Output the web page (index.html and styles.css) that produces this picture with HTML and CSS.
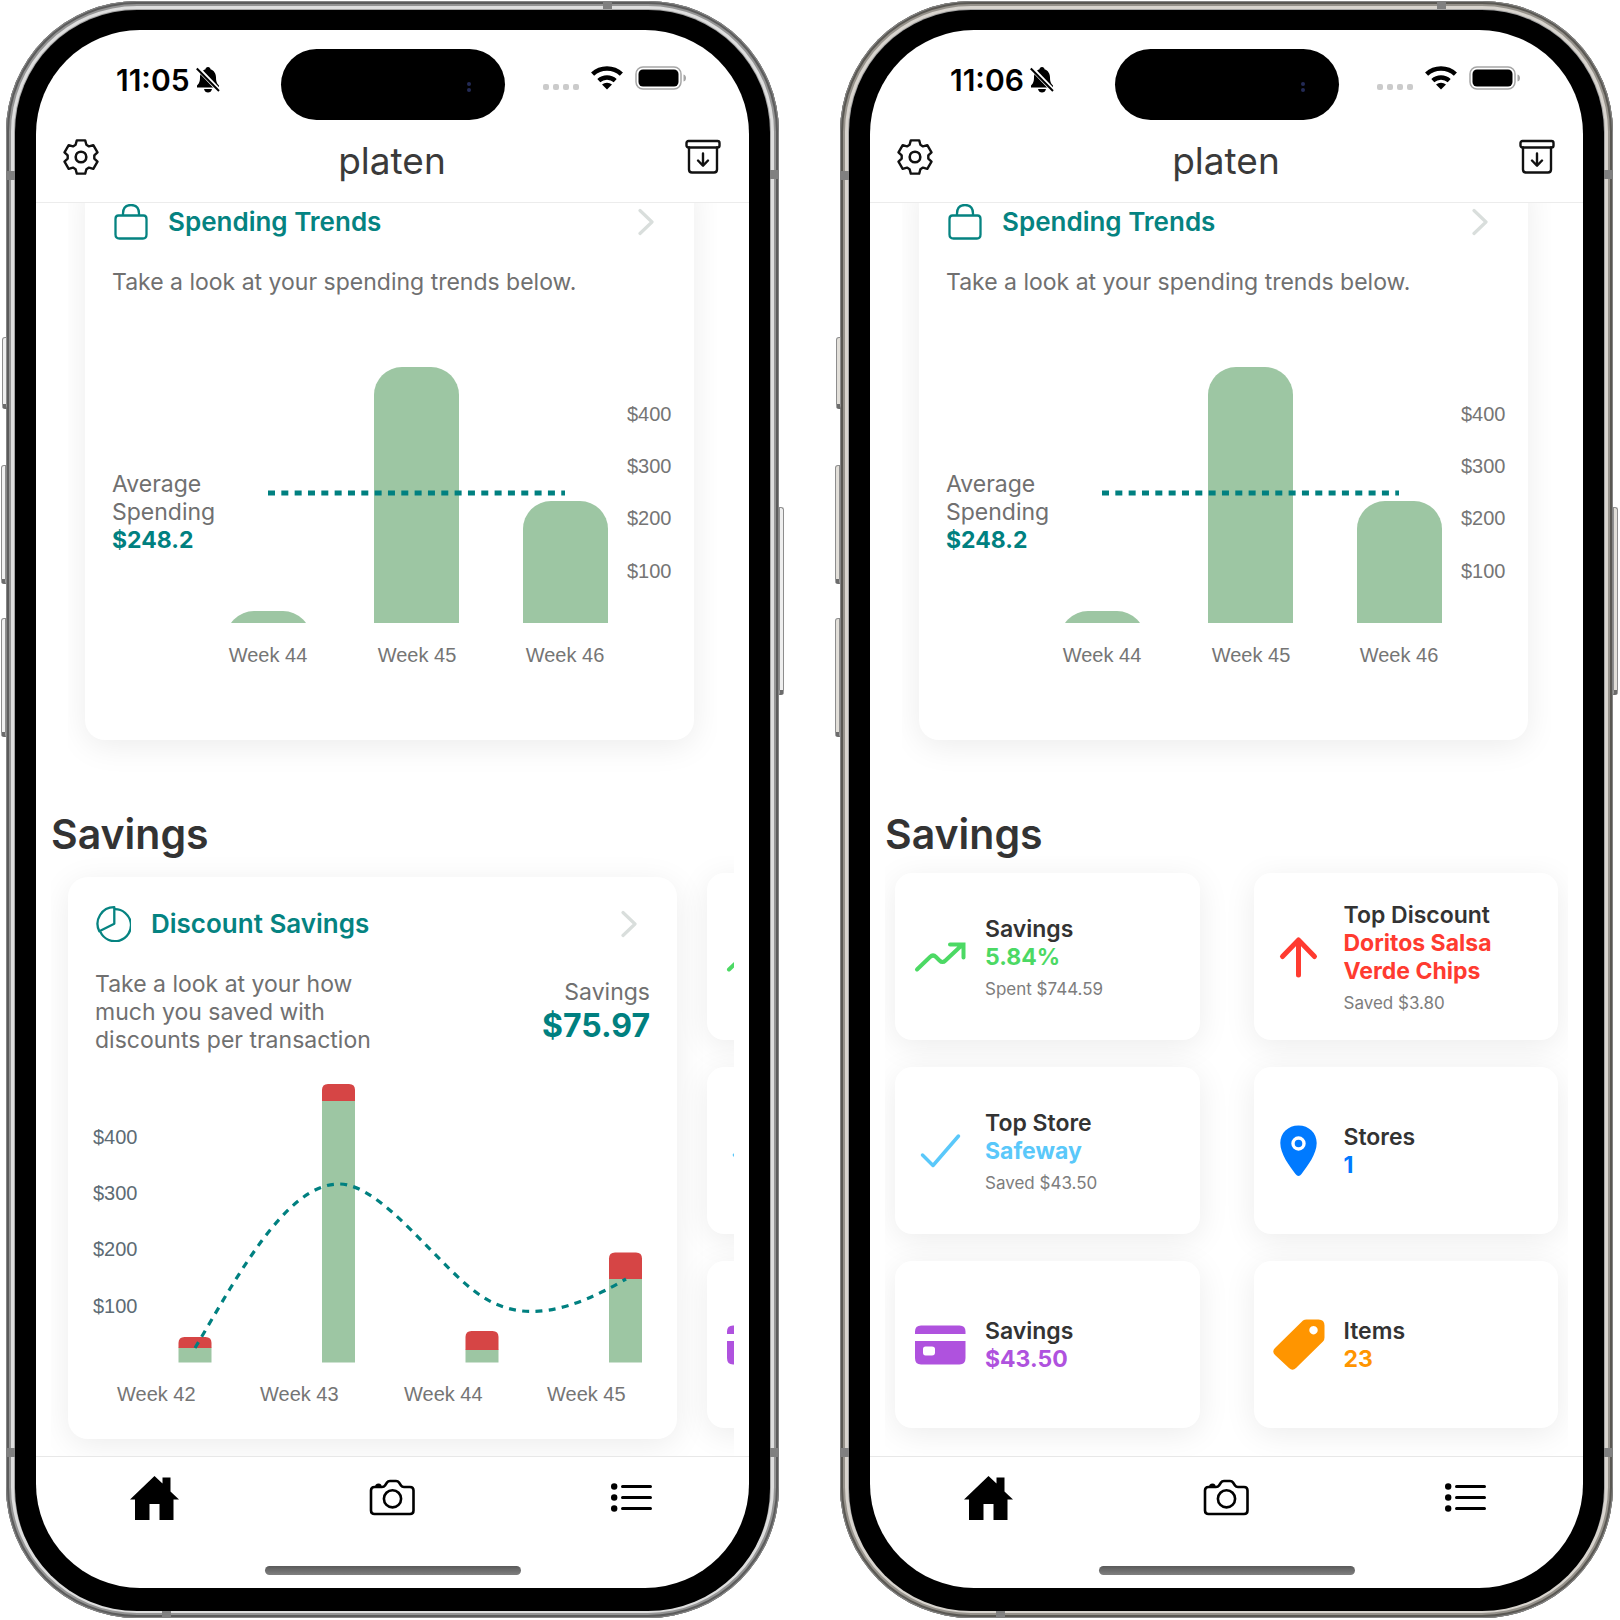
FILE: index.html
```html
<!DOCTYPE html>
<html lang="en">
<head>
<meta charset="utf-8">
<meta name="viewport" content="width=device-width, initial-scale=1">
<title>platen</title>
<link rel="stylesheet" href="styles.css">
</head>
<body>
<svg class="sprite" aria-hidden="true">
  <symbol id="bell-off" viewBox="0 0 24 26">
    <path d="M12 0C13.600 0 14.300 1 14.500 2.200C18 3.400 20 6.600 20 10.500C20 15.500 21.500 17 23 18.600V20.500H1V18.600C2.500 17 4 15.500 4 10.500C4 6.600 6 3.400 9.500 2.200C9.700 1 10.400 0 12 0Z"/>
    <path d="M8 22H16C15.500 24.500 14 25.500 12 25.500S8.500 24.500 8 22Z"/>
    <path d="M1.500 1L23.500 24" stroke="#fff" stroke-width="4.500"/>
    <path d="M0.800 1.500L23 24" stroke="#000" stroke-width="2"/>
  </symbol>
  <symbol id="wifi" viewBox="0 0 32 24">
    <path d="M1.600 8.100A21 21 0 0 1 30.400 8.100" fill="none" stroke="#000" stroke-width="4.500"/>
    <path d="M7.800 14.600A12.500 12.500 0 0 1 24.200 14.600" fill="none" stroke="#000" stroke-width="4.500"/>
    <path d="M11 18.600A7.500 7.500 0 0 1 21 18.600L16 23.600Z"/>
  </symbol>
  <symbol id="battery" viewBox="0 0 52 24">
    <rect x="1" y="1" width="45" height="22" rx="7" fill="none" stroke="#a6a6a6" stroke-width="1.500"/>
    <rect x="3.500" y="3.500" width="40" height="17" rx="4.500"/>
    <path d="M48.500 8.500C50.500 9 51 10.500 51 12S50.500 15 48.500 15.500Z" fill="#a6a6a6"/>
  </symbol>
  <symbol id="gear" viewBox="-18 -18 36 36">
    <path d="M-4.200 -16.600H4.200L5.400 -12.200L8 -10.600L12.300 -11.900L16.500 -4.700L13.300 -1.600V1.600L16.500 4.700L12.300 11.900L8 10.600L5.400 12.200L4.200 16.600H-4.200L-5.400 12.200L-8 10.600L-12.300 11.900L-16.500 4.700L-13.300 1.600V-1.600L-16.500 -4.700L-12.300 -11.900L-8 -10.600L-5.400 -12.200Z" fill="none" stroke="#111" stroke-width="2.400" stroke-linejoin="round"/>
    <circle r="5.300" fill="none" stroke="#111" stroke-width="2.600"/>
  </symbol>
  <symbol id="archive" viewBox="0 0 36 36">
    <g fill="none" stroke="#111" stroke-width="2.400" stroke-linecap="round" stroke-linejoin="round">
      <rect x="1.500" y="2" width="33" height="6.500" rx="2"/>
      <path d="M4 8.500V30.500Q4 33.500 7 33.500H29Q32 33.500 32 30.500V8.500M18 14.500V26.500M13 21.500L18 26.800L23 21.500"/>
    </g>
  </symbol>
  <symbol id="bag" viewBox="0 0 36 36">
    <path d="M6.500 11.500H31.500Q34.500 11.500 34.500 15V30.500Q34.500 34.500 31 34.500H7.500Q3.500 34.500 3.500 30.500V15Q3.500 11.500 6.500 11.500ZM11 11V9.500Q11 1 19 1T27 9.500V11" fill="none" stroke="#058381" stroke-width="2.300"/>
  </symbol>
  <symbol id="pie" viewBox="0 0 36 36">
    <path d="M19.300 3.200A16 16 0 1 1 5.300 25.600" fill="none" stroke="#058381" stroke-width="2.300"/>
    <path d="M19.300 1.200V17.800L4.300 25.200A16.600 16.600 0 0 1 19.300 1.200Z" fill="none" stroke="#058381" stroke-width="2.300" stroke-linejoin="round"/>
  </symbol>
  <symbol id="chevron" viewBox="0 0 18 28">
    <path d="M2 2.500L14 14L2 25.500" fill="none" stroke="#d9dedc" stroke-width="3.200" stroke-linecap="round" stroke-linejoin="round"/>
  </symbol>
  <symbol id="trend" viewBox="0 0 52 52">
    <path d="M3 38.500L16 26Q19 23 22 26L25.500 29.500Q28.500 32.500 31.500 29.500L48 14M36 13.500H49.500V26.500" fill="none" stroke="#4cd964" stroke-width="4" stroke-linecap="round" stroke-linejoin="miter"/>
  </symbol>
  <symbol id="check" viewBox="0 0 52 52">
    <path d="M8.500 30L19 40.500L44.500 11" fill="none" stroke="#5ac8fa" stroke-width="3.500" stroke-linecap="round" stroke-linejoin="round"/>
  </symbol>
  <symbol id="card" viewBox="0 0 52 52">
    <path d="M1 15V12.500Q1 6.500 7 6.500H45.500Q51.500 6.500 51.500 12.500V15ZM1 22H51.500V39Q51.500 45.500 45.500 45.500H7Q1 45.500 1 39ZM11.500 27.500Q9 27.500 9 30V33.500Q9 36.500 11.500 36.500H18Q21 36.500 21 33.500V30Q21 27.500 18 27.500Z" fill="#af52de" fill-rule="evenodd"/>
  </symbol>
  <symbol id="arrow-up" viewBox="0 0 52 52">
    <path d="M25.500 44V9.500M9.500 25.500L25.500 9L41.500 25.500" fill="none" stroke="#ff3b30" stroke-width="5" stroke-linecap="round" stroke-linejoin="round"/>
  </symbol>
  <symbol id="pin" viewBox="0 0 52 52">
    <path d="M25.500 0.500C36 0.500 43.700 8 43.700 18C43.700 29 34.500 41 28.500 49Q25.500 53 22.500 49C16.500 41 7.300 29 7.300 18C7.300 8 15 0.500 25.500 0.500Z" fill="#007aff"/>
    <circle cx="25.500" cy="18.500" r="5.500" fill="#007aff" stroke="#fff" stroke-width="3.400"/>
  </symbol>
  <symbol id="tag" viewBox="0 0 52 52">
    <path d="M30 1.500Q31.500 0.500 33.500 0.500H45.500Q51.500 0.500 51.500 6.500V18.500Q51.500 21 50 22.500L23 49Q19.500 52.500 16 49L2 36Q-1.500 32.500 2 29ZM40.500 7A4.200 4.200 0 1 0 40.510 7Z" fill="#ff9500" fill-rule="evenodd"/>
  </symbol>
  <symbol id="home" viewBox="0 0 50 44">
    <path d="M24.500 0L32.500 7.500V1.500H40.500V15.500L49 23.500H43.500V44H29.500V28H19.500V44H5V23.500H0Z"/>
  </symbol>
  <symbol id="camera" viewBox="0 0 46 44">
    <g fill="none" stroke="#000" stroke-width="2.600" stroke-linejoin="round">
      <path d="M5.500 11H13Q15 11 16 9.500L18 6.500Q19 5 21 5H27Q29 5 30 6.500L32 9.500Q33 11 35 11H41Q44.500 11 44.500 14.500V34.500Q44.500 38 41 38H5.500Q2 38 2 34.500V14.500Q2 11 5.500 11Z"/>
      <circle cx="23.500" cy="22.800" r="8.600"/>
    </g>
    <path d="M6 11Q6 7.500 9.500 7.500T12.500 11Z"/>
  </symbol>
  <symbol id="list" viewBox="0 0 46 32">
    <circle cx="7.200" cy="4.500" r="3.200"/><circle cx="7.200" cy="15.500" r="3.200"/><circle cx="7.200" cy="26.500" r="3.200"/>
    <path d="M15.500 4.500H43.500M15.500 15.500H43.500M15.500 26.500H43.500" stroke="#000" stroke-width="3" stroke-linecap="round"/>
  </symbol>
  <symbol id="trends-chart" viewBox="0 0 452 322">
    <clipPath id="baseline"><path d="M0 0H452V273H0Z"/></clipPath>
    <g fill="#9dc6a3" clip-path="url(#baseline)">
      <rect x="4" y="261" width="85" height="80" rx="28"/>
      <rect x="152" y="17" width="85" height="320" rx="28"/>
      <rect x="301" y="151" width="85" height="180" rx="28"/>
    </g>
    <path d="M46 143H343" stroke="#008080" stroke-width="5" stroke-dasharray="7 6.330"/>
  </symbol>
</svg>

<main class="devices">
  <section class="phone">
    <span class="key key-action"></span><span class="key key-up"></span><span class="key key-down"></span><span class="key key-power"></span>
    <span class="band band-top"></span><span class="band band-left"></span><span class="band band-right"></span><span class="band band-low-left"></span><span class="band band-low-right"></span><span class="band band-bottom"></span>
    <div class="bezel">
      <div class="screen">
        <div class="status">
          <div class="clock"><time>11:05</time><svg width="24" height="26"><use href="#bell-off"/></svg></div>
          <div class="island"><i></i><i></i></div>
          <div class="signals">
            <div class="cell"><i></i><i></i><i></i><i></i></div>
            <svg width="32" height="24"><use href="#wifi"/></svg>
            <svg width="52" height="24"><use href="#battery"/></svg>
          </div>
        </div>
        <header class="topbar">
          <button type="button" aria-label="Settings"><svg width="36" height="36"><use href="#gear"/></svg></button>
          <h1>platen</h1>
          <button type="button" aria-label="Archive"><svg width="36" height="36"><use href="#archive"/></svg></button>
        </header>
        <div class="content">
          <div class="trends">
            <article class="card">
              <a class="card-head" href="#trends"><svg width="36" height="36"><use href="#bag"/></svg><h2>Spending Trends</h2><svg width="18" height="28"><use href="#chevron"/></svg></a>
              <p class="copy">Take a look at your spending trends below.</p>
              <div class="trends-row">
                <p class="copy average">Average Spending <b>$248.2</b></p>
                <svg class="chart" viewBox="0 0 452 322">
                  <use href="#trends-chart"/>
                  <g text-anchor="middle"><text x="46" y="312">Week 44</text><text x="195" y="312">Week 45</text><text x="343" y="312">Week 46</text></g>
                  <text x="405" y="71">$400</text><text x="405" y="123">$300</text><text x="405" y="175">$200</text><text x="405" y="228">$100</text>
                </svg>
              </div>
            </article>
          </div>
          <h2 class="section-title">Savings</h2>
          <div class="carousel">
            <article class="card discount">
              <a class="card-head" href="#discounts"><svg width="36" height="36"><use href="#pie"/></svg><h2>Discount Savings</h2><svg width="18" height="28"><use href="#chevron"/></svg></a>
              <div class="summary">
                <p class="copy">Take a look at your how much you saved with discounts per transaction</p>
                <p class="copy total">Savings <b>$75.97</b></p>
              </div>
              <svg class="chart" viewBox="0 0 555 342">
                <g class="axis"><text x="-2" y="74">$400</text><text x="-2" y="130">$300</text><text x="-2" y="186">$200</text><text x="-2" y="243">$100</text></g>
                <g fill="#9dc6a3"><path d="M83.500 277.500H116.500V292.500H83.500ZM227 31H260V292.500H227ZM370.500 279.500H403.500V292.500H370.500ZM514 208H547V292.500H514Z"/></g>
                <g fill="#d64545">
                  <path d="M83.500 278V273Q83.500 267 89.500 267H110.500Q116.500 267 116.500 273V278Z"/>
                  <path d="M227 31V20Q227 14 233 14H254Q260 14 260 20V31Z"/>
                  <path d="M370.500 280V267Q370.500 261 376.500 261H397.500Q403.500 261 403.500 267V280Z"/>
                  <path d="M514 209V188.500Q514 182.500 520 182.500H541Q547 182.500 547 188.500V209Z"/>
                </g>
                <path d="M100 278C140 211 190 114 244 114C288 114 345 199.500 387 226.500C429 254 476 241 531 209" fill="none" stroke="#008080" stroke-width="3.200" stroke-dasharray="7 6.330"/>
                <text x="22" y="331">Week 42</text><text x="165" y="331">Week 43</text><text x="309" y="331">Week 44</text><text x="452" y="331">Week 45</text>
              </svg>
            </article>
            <div class="tiles next">
              <article class="tile"><svg width="52" height="52"><use href="#trend"/></svg></article>
              <article class="tile"><svg width="52" height="52"><use href="#check"/></svg></article>
              <article class="tile"><svg width="52" height="52"><use href="#card"/></svg></article>
            </div>
          </div>
        </div>
        <nav class="tabs">
          <a href="#home" aria-label="Home"><svg width="50" height="44"><use href="#home"/></svg></a>
          <a href="#scan" aria-label="Scan"><svg width="46" height="44"><use href="#camera"/></svg></a>
          <a href="#list" aria-label="List"><svg width="46" height="32"><use href="#list"/></svg></a>
        </nav>
        <div class="indicator"></div>
      </div>
    </div>
  </section>

  <section class="phone warm">
    <span class="key key-action"></span><span class="key key-up"></span><span class="key key-down"></span><span class="key key-power"></span>
    <span class="band band-top"></span><span class="band band-left"></span><span class="band band-right"></span><span class="band band-low-left"></span><span class="band band-low-right"></span><span class="band band-bottom"></span>
    <div class="bezel">
      <div class="screen">
        <div class="status">
          <div class="clock"><time>11:06</time><svg width="24" height="26"><use href="#bell-off"/></svg></div>
          <div class="island"><i></i><i></i></div>
          <div class="signals">
            <div class="cell"><i></i><i></i><i></i><i></i></div>
            <svg width="32" height="24"><use href="#wifi"/></svg>
            <svg width="52" height="24"><use href="#battery"/></svg>
          </div>
        </div>
        <header class="topbar">
          <button type="button" aria-label="Settings"><svg width="36" height="36"><use href="#gear"/></svg></button>
          <h1>platen</h1>
          <button type="button" aria-label="Archive"><svg width="36" height="36"><use href="#archive"/></svg></button>
        </header>
        <div class="content">
          <div class="trends">
            <article class="card">
              <a class="card-head" href="#trends"><svg width="36" height="36"><use href="#bag"/></svg><h2>Spending Trends</h2><svg width="18" height="28"><use href="#chevron"/></svg></a>
              <p class="copy">Take a look at your spending trends below.</p>
              <div class="trends-row">
                <p class="copy average">Average Spending <b>$248.2</b></p>
                <svg class="chart" viewBox="0 0 452 322">
                  <use href="#trends-chart"/>
                  <g text-anchor="middle"><text x="46" y="312">Week 44</text><text x="195" y="312">Week 45</text><text x="343" y="312">Week 46</text></g>
                  <text x="405" y="71">$400</text><text x="405" y="123">$300</text><text x="405" y="175">$200</text><text x="405" y="228">$100</text>
                </svg>
              </div>
            </article>
          </div>
          <h2 class="section-title">Savings</h2>
          <div class="carousel">
            <div class="tiles">
              <article class="tile"><svg width="52" height="52"><use href="#trend"/></svg><div><h3>Savings</h3><p class="value green">5.84%</p><p class="note">Spent $744.59</p></div></article>
              <article class="tile"><svg width="52" height="52"><use href="#arrow-up"/></svg><div><h3>Top Discount</h3><p class="value red">Doritos Salsa Verde Chips</p><p class="note">Saved $3.80</p></div></article>
              <article class="tile"><svg width="52" height="52"><use href="#check"/></svg><div><h3>Top Store</h3><p class="value sky">Safeway</p><p class="note">Saved $43.50</p></div></article>
              <article class="tile"><svg width="52" height="52"><use href="#pin"/></svg><div><h3>Stores</h3><p class="value blue">1</p></div></article>
              <article class="tile"><svg width="52" height="52"><use href="#card"/></svg><div><h3>Savings</h3><p class="value purple">$43.50</p></div></article>
              <article class="tile"><svg width="52" height="52"><use href="#tag"/></svg><div><h3>Items</h3><p class="value orange">23</p></div></article>
            </div>
          </div>
        </div>
        <nav class="tabs">
          <a href="#home" aria-label="Home"><svg width="50" height="44"><use href="#home"/></svg></a>
          <a href="#scan" aria-label="Scan"><svg width="46" height="44"><use href="#camera"/></svg></a>
          <a href="#list" aria-label="List"><svg width="46" height="32"><use href="#list"/></svg></a>
        </nav>
        <div class="indicator"></div>
      </div>
    </div>
  </section>
</main>
</body>
</html>
```
FILE: styles.css
```css
* { box-sizing: border-box; margin: 0; padding: 0; }

body {
  background: #fff;
  color: #333;
  font-family: Inter, "Liberation Sans", sans-serif;
}

a { color: inherit; text-decoration: none; }
svg { display: block; flex: none; }
.sprite { position: absolute; width: 0; height: 0; }

.devices {
  display: grid;
  grid-template-columns: 1fr 1fr;
  gap: 61px;
  padding: 1px 7px 2px 6px;
}

/* Device shell */
.phone {
  --edge: #5c5c5c;
  --rim: #949494;
  --shine: #dedede;
  position: relative;
  min-width: 0;
  padding: 9px 9px 7px;
  border-radius: 131px;
  background: #a5a5a5;
  box-shadow: inset 0 0 0 1px #858585, inset 0 0 0 3px var(--edge), inset 0 0 0 5px var(--rim), inset 0 0 0 8px var(--shine);
}
.phone.warm { --edge: #5a5853; --rim: #96928b; --shine: #d8d4ce; }

.bezel {
  height: 100%;
  padding: 20px 21px 23px;
  border-radius: 122px;
  background: #000;
}

.screen {
  display: flex;
  flex-direction: column;
  height: 100%;
  overflow: hidden;
  border-radius: 104px;
  background: #fff;
}

.key {
  position: absolute;
  width: 5px;
  border: 1px solid #8e8e8e;
  border-bottom: 5px solid #6c6c6c;
  border-radius: 3px 0 0 3px;
  background: #efefef;
}
.warm .key { background: #e2dfd9; }
.key-action { left: -4px; top: 336px; height: 72px; }
.key-up { left: -5px; top: 464px; height: 119px; }
.key-down { left: -5px; top: 617px; height: 119px; }
.key-power { right: -5px; top: 506px; height: 188px; border-radius: 0 3px 3px 0; }

.band { position: absolute; width: 9px; height: 9px; background: #808080; }
.band-top { left: 597px; top: 0; height: 8px; }
.band-left { left: 0; top: 170px; }
.band-right { right: 0; top: 169px; }
.band-low-left { left: 0; bottom: 161px; }
.band-low-right { right: 0; bottom: 161px; }
.band-bottom { left: 156px; bottom: 0; height: 7px; }

/* Status bar */
.status {
  display: grid;
  grid-template-columns: 1fr 224px 1fr;
  align-items: start;
  padding-top: 19px;
}
.clock {
  display: flex;
  align-items: center;
  gap: 6px;
  padding: 15px 0 0 80px;
  font-size: 30px;
  font-weight: 600;
  line-height: 32px;
  color: #000;
}
.island {
  display: flex;
  flex-direction: column;
  align-items: flex-end;
  justify-content: center;
  gap: 2px;
  height: 71px;
  padding: 5px 34px 0 0;
  border-radius: 36px;
  background: #000;
}
.island i { width: 4px; height: 4px; border-radius: 50%; background: #232a55; }
.signals {
  display: flex;
  justify-content: flex-end;
  align-items: center;
  gap: 12px;
  padding: 17px 62px 0 0;
}
.cell { display: flex; gap: 4px; padding-top: 18px; }
.cell i { width: 6px; height: 6px; border-radius: 2px; background: #cbcbcb; }

/* App header */
.topbar {
  display: flex;
  align-items: center;
  justify-content: space-between;
  height: 83px;
  padding: 0 28px 8px 27px;
  border-bottom: 1px solid #ececec;
}
.topbar button { border: 0; background: none; cursor: pointer; }
.topbar h1 {
  padding-top: 8px;
  font-size: 37px;
  font-weight: 400;
  line-height: 46px;
  color: #3a3a3a;
}

/* Scrolled content */
.content { flex: 1; overflow: hidden; }

.card {
  padding: 29px 27px 27px;
  border-radius: 20px;
  background: #fff;
  box-shadow: 0 6px 32px rgba(0, 0, 0, .08);
}
.card-head {
  display: flex;
  align-items: center;
  gap: 20px;
  padding-right: 11px;
  color: #058381;
}
.card-head h2 { flex: 1; font-size: 26px; font-weight: 600; line-height: 36px; }

.copy { font-size: 23px; line-height: 28px; color: #707070; }
.copy b { display: block; color: #008080; font-weight: 700; }
.card-head + .copy, .summary { margin-top: 28px; }

.trends { margin: -28px 32px 0; padding: 0 23px 32px 17px; overflow: hidden; }
.trends-row {
  display: flex;
  align-items: center;
  margin: 54px -7px 41px 0;
}
.average { flex: none; width: 110px; padding-top: 2px; }

.chart {
  flex: 1;
  display: block;
  width: 100%;
  min-width: 0;
  overflow: visible;
  font-family: "Liberation Sans", Arial, sans-serif;
  font-size: 20px;
  fill: #757575;
}
.axis { fill: #5d6b74; }

.section-title {
  margin: 40px 15px 0;
  font-size: 41px;
  font-weight: 600;
  line-height: 44px;
}

.carousel {
  display: flex;
  align-items: flex-start;
  margin: 0 15px;
  padding-top: 17px;
  overflow: hidden;
}
.discount { flex: none; width: calc(100% - 74px); margin: 4px 30px 17px 17px; }
.summary { display: flex; align-items: center; justify-content: space-between; }
.summary .copy:first-child { width: 300px; }
.summary .total { text-align: right; }
.total b { font-size: 32px; line-height: 40px; }
.discount .chart { margin-top: 16px; }

.tiles {
  display: grid;
  flex: 1;
  grid-template-columns: 1fr 1fr;
  gap: 27px 54px;
  padding: 0 10px 28px;
}
.tiles.next { flex: none; grid-template-columns: 304px; padding: 0; }
.tile {
  display: flex;
  align-items: center;
  gap: 19px;
  min-width: 0;
  min-height: 167px;
  padding: 20px 20px 20px 19px;
  border-radius: 17px;
  background: #fff;
  box-shadow: 0 6px 32px rgba(0, 0, 0, .08);
}
.tile h3, .value { font-size: 23px; font-weight: 600; line-height: 28px; }
.value { font-weight: 700; }
.note { margin-top: 8px; font-size: 17px; line-height: 20px; color: #7d7d7d; }
.green { color: #4cd964; }
.red { color: #ff3b30; }
.sky { color: #5ac8fa; }
.blue { color: #007aff; }
.purple { color: #af52de; }
.orange { color: #ff9500; }

/* Tab bar */
.tabs {
  display: grid;
  grid-template-columns: repeat(3, 1fr);
  height: 83px;
  border-top: 1px solid #e8e8e8;
}
.tabs a { display: grid; place-items: center; }
.indicator {
  width: 256px;
  height: 9px;
  margin: 27px auto 13px;
  border-radius: 5px;
  background: linear-gradient(#5a5a5a, #808080);
}
```
